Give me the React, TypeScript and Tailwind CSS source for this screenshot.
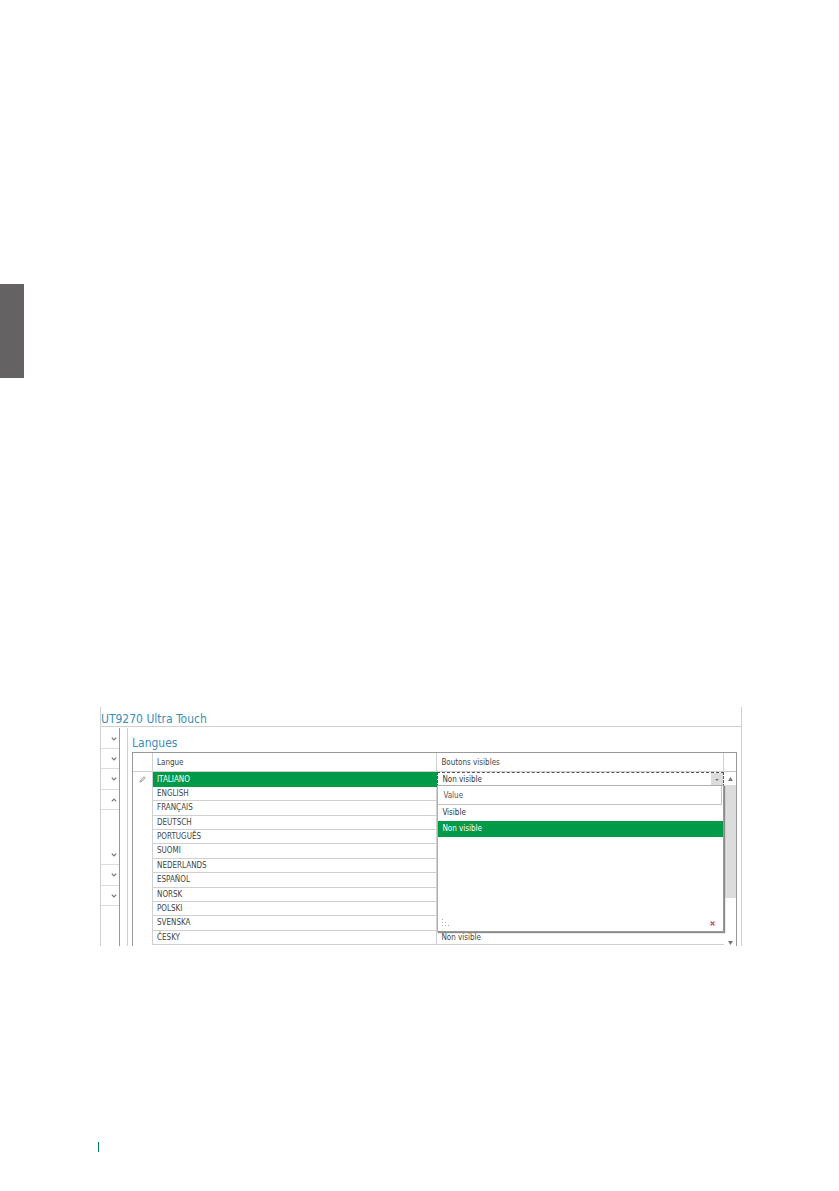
import { clsx } from "clsx";
import { useState } from "react";

interface LanguageRow {
  name: string;
  visibility?: string;
}

interface SideItem {
  id: number;
  open?: boolean;
}

const rows: LanguageRow[] = [
  { name: "ENGLISH" },
  { name: "FRANÇAIS" },
  { name: "DEUTSCH" },
  { name: "PORTUGUÊS" },
  { name: "SUOMI" },
  { name: "NEDERLANDS" },
  { name: "ESPAÑOL" },
  { name: "NORSK" },
  { name: "POLSKI" },
  { name: "SVENSKA" },
  { name: "ČESKY", visibility: "Non visible" },
];

const sideItems: SideItem[] = [
  { id: 1 },
  { id: 2 },
  { id: 3 },
  { id: 4, open: true },
  { id: 5 },
  { id: 6 },
  { id: 7 },
];

const options = ["Visible", "Non visible"];

function Chevron({ up = false }: { up?: boolean }) {
  return (
    <svg viewBox="0 0 6 4" className={clsx("h-1 w-1.5", up && "rotate-180")} fill="none">
      <path d="M0.8 0.7 L3 2.9 L5.2 0.7" stroke="#777" strokeWidth="1.2" />
    </svg>
  );
}

function Sidebar() {
  return (
    <nav className="mt-px w-[19px] shrink-0 border-r border-[#999] pt-px">
      {sideItems.map((item) => (
        <button
          key={item.id}
          aria-expanded={!!item.open}
          className={clsx(
            "flex h-[20px] w-full items-center justify-end border-b border-[#dcdcdc] pr-[2px] nth-[3n]:h-[21px]",
            item.open && "mb-[35px]",
          )}
        >
          <Chevron up={item.open} />
        </button>
      ))}
    </nav>
  );
}

function ValuePopup({ value, onPick }: { value: string; onPick: (v: string) => void }) {
  return (
    <div className="absolute top-full -right-px -left-px z-10 -mt-px flex h-[147px] flex-col border border-[#999] border-t-[#b0b0b0] border-l-[#b0b0b0] bg-white shadow-[1px_1px_1px_#8a8a8a]">
      <div className="mr-px h-[19px] shrink-0 border-r border-b border-[#c4c4c4] pl-[5px] leading-[19px] text-[#555]">
        Value
      </div>
      <div role="listbox" aria-label="Value" className="flex flex-col">
        {options.map((option) => (
          <button
            key={option}
            role="option"
            aria-selected={option === value}
            onClick={() => onPick(option)}
            className={clsx(
              "h-[16px] pl-1 text-left leading-[16px]",
              option === value ? "bg-[#009a49] text-white" : "text-[#333]",
            )}
          >
            {option}
          </button>
        ))}
      </div>
      <div className="mt-auto flex items-center justify-between pr-2 pb-1 pl-1">
        <svg viewBox="0 0 8 8" className="size-2" fill="#aaa">
          <path d="M0 0h1v1H0zM0 3h1v1H0zM3 3h1v1H3zM0 6h1v1H0zM3 6h1v1H3zM6 6h1v1H6z" />
        </svg>
        <button aria-label="Clear">
          <svg viewBox="0 0 5 5" className="size-[5px]" fill="none" stroke="#cf4860" strokeWidth="1.1">
            <path d="M0.5 0.5 L4.5 4.5 M4.5 0.5 L0.5 4.5" />
          </svg>
        </button>
      </div>
    </div>
  );
}

function Scrollbar() {
  return (
    <div className="flex w-[12px] shrink-0 flex-col items-center">
      <div className="h-[19px] w-full shrink-0 border-b border-[#c4c4c4]" />
      <svg viewBox="0 0 5 4" className="mt-[5px] mb-1 h-1 w-[5px] shrink-0" fill="#777">
        <path d="M2.5 0 L5 4 H0z" />
      </svg>
      <div className="h-[113px] w-full shrink-0 bg-[#dcdcdc]" />
      <svg viewBox="0 0 5 4" className="mt-auto h-1 w-[5px] shrink-0" fill="#777">
        <path d="M2.5 4 L5 0 H0z" />
      </svg>
    </div>
  );
}

function LanguageGrid() {
  const [value, setValue] = useState("Non visible");

  return (
    <div className="flex border-x border-t border-[#999] pb-px">
      <table className="w-full min-w-0 flex-1 table-fixed border-separate border-spacing-0 text-left text-[#444]">
        <colgroup>
          <col className="w-[20px]" />
          <col />
          <col className="w-[48.5%]" />
        </colgroup>
        <thead>
          <tr className="h-[19px]">
            <th className="border-r border-b border-[#d0d0d0] p-0" />
            <th className="border-r border-b border-[#d0d0d0] p-0 pt-0.5 pl-1 font-normal">Langue</th>
            <th className="border-r border-b border-[#d0d0d0] p-0 pt-0.5 pl-1 font-normal">Boutons visibles</th>
          </tr>
        </thead>
        <tbody>
          <tr className="h-[15px]">
            <td className="border-r border-[#d0d0d0] p-0">
              <svg viewBox="0 0 8 8" className="mx-auto size-[7px]" fill="none">
                <path d="M1 7 L2 4.5 L5.7 0.8 L7.2 2.3 L3.5 6 z" fill="#ddd" stroke="#888" strokeWidth="0.8" />
              </svg>
            </td>
            <td className="bg-[#009a49] p-0 pl-1 text-white">ITALIANO</td>
            <td className="relative border border-dashed border-[#555] p-0">
              <div className="flex h-[13px]">
                <select
                  aria-label="Boutons visibles"
                  value={value}
                  onChange={(e) => setValue(e.target.value)}
                  className="min-w-0 flex-1 appearance-none pl-1 leading-[13px] text-[#333]"
                >
                  {options.map((option) => (
                    <option key={option}>{option}</option>
                  ))}
                </select>
                <span className="flex w-[12px] items-center justify-center bg-[#dcdcdc]">
                  <svg viewBox="0 0 4 2" className="h-0.5 w-1" fill="#777">
                    <path d="M0 0h4L2 2z" />
                  </svg>
                </span>
              </div>
              <ValuePopup value={value} onPick={setValue} />
            </td>
          </tr>
          {rows.map((row) => (
            <tr key={row.name} className="h-[14px] nth-[5n+1]:h-[15px] nth-[5n+3]:h-[15px]">
              <td className="border-r border-[#d0d0d0] p-0" />
              <td className="border-r border-b border-[#d0d0d0] p-0 pl-1">{row.name}</td>
              <td className="border-b border-[#d0d0d0] p-0 pl-1">{row.visibility}</td>
            </tr>
          ))}
        </tbody>
      </table>
      <Scrollbar />
    </div>
  );
}

export default function App() {
  return (
    <div className="flex min-h-screen flex-col bg-white pb-[39px] font-['DejaVu_Sans_Condensed','DejaVu_Sans',sans-serif] text-[8px] leading-[12px]">
      {/* Page thumb tab */}
      <div className="mt-[284px] h-[94px] w-6 bg-[#656263]" />

      <section className="mt-[329px] mr-[97px] ml-[100px] border-x border-[#d0d0d0]">
        <h1 className="h-[20px] border-b border-[#d0d0d0] text-[12px] leading-[24px] text-[#3a8dbd]">
          UT9270 Ultra Touch
        </h1>
        <div className="flex">
          <Sidebar />
          <main className="mt-px ml-[7px] min-w-0 flex-1 border-l border-[#d0d0d0] pr-1 pl-1">
            <h2 className="h-[24px] text-[12px] leading-[31px] text-[#3a8dbd]">Langues</h2>
            <LanguageGrid />
          </main>
        </div>
      </section>

      {/* Footer rule */}
      <div className="mt-auto ml-[98px] h-[10px] w-px bg-[#007a5e]" />
    </div>
  );
}
